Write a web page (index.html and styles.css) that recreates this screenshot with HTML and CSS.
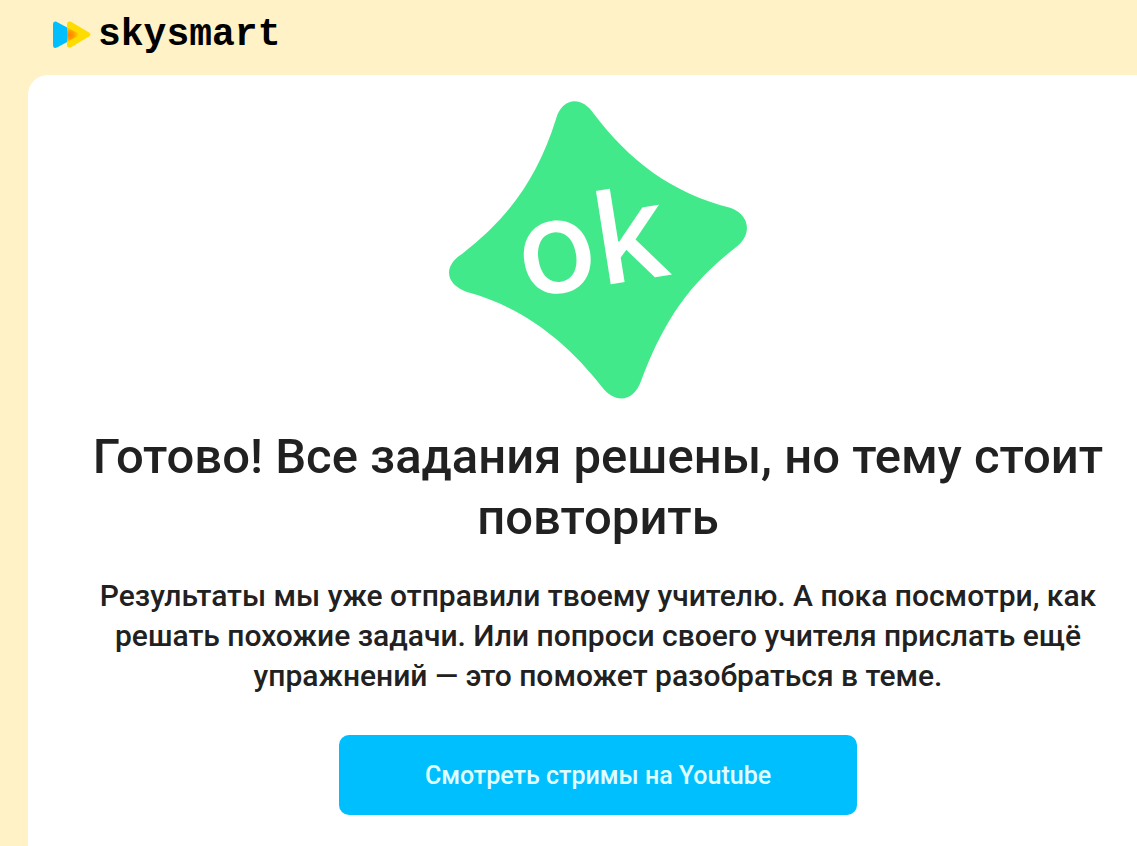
FILE: index.html
```html
<!DOCTYPE html>
<html lang="ru">
<head>
<meta charset="utf-8">
<meta name="viewport" content="width=device-width, initial-scale=1">
<title>Skysmart</title>
<link rel="stylesheet" href="styles.css">
</head>
<body class="page">
<header class="header">
  <a class="logo" href="#">
    <svg class="logo-mark" viewBox="0 0 38 28" aria-hidden="true">
      <defs>
        <radialGradient id="glow" gradientUnits="userSpaceOnUse" cx="17" cy="14" r="9">
          <stop offset="0" stop-color="#ff8200"/>
          <stop offset="0.4" stop-color="#ff9a00"/>
          <stop offset="1" stop-color="#ffdc00"/>
        </radialGradient>
      </defs>
      <path fill="#00bfff" d="M0 3Q0 0 3 0.500L16 7.500V20L4 26.500Q0 28 0 24Z"/>
      <path fill="#ffdc00" d="M14 3Q14-0.500 18 0.800L36 11.500Q38.500 13.500 36 15.500L18 26.200Q14 27.500 14 24Z"/>
      <path fill="url(#glow)" d="M14 6.500L25 12Q27 13.500 25 15L14 21Z"/>
    </svg>
    <span class="logo-text">skysmart</span>
  </a>
</header>
<main class="card">
  <svg class="badge" viewBox="0 0 300 300" role="img" aria-label="ok">
    <path fill="#42e98a" d="M108 19C114-2 133-5 146 14C181 60 223 93 283 108C303 116 304 136 287 148C237 187 214 226 193 281C186 302 167 304 154 287C119 242 75 207 19 192C-3 184-5 166 14 154C63 116 90 76 108 19Z"/>
    <text class="badge-text" transform="translate(76 198) rotate(-9)">ok</text>
  </svg>
  <h1 class="title">Готово! Все задания решены, но тему стоит повторить</h1>
  <p class="description">Результаты мы уже отправили твоему учителю. А пока посмотри, как решать похожие задачи. Или попроси своего учителя прислать ещё упражнений — это поможет разобраться в теме.</p>
  <button class="action" type="button">Смотреть стримы на Youtube</button>
</main>
</body>
</html>
```
FILE: styles.css
```css
* {
  box-sizing: border-box;
}

.page {
  display: flex;
  flex-direction: column;
  min-height: 100vh;
  margin: 0;
  background: #fef2c6;
  color: #212121;
  font-family: Roboto, "Noto Sans", sans-serif;
}

.header {
  display: flex;
  height: 75px;
  padding: 12px 53px;
}

.logo {
  display: flex;
  align-items: center;
  gap: 7px;
  height: 46px;
  color: #000;
  text-decoration: none;
}

.logo-mark {
  width: 38px;
  height: 28px;
}

.logo-text {
  font: bold 38px/40px "Liberation Mono", monospace;
}

.card {
  display: flex;
  flex: 1;
  flex-direction: column;
  align-items: center;
  margin-left: 28px;
  padding: 25px 24px 31px 55px;
  border-top-left-radius: 20px;
  background: #fff;
}

.badge {
  width: 300px;
  height: 300px;
}

.badge-text {
  fill: #fff;
  font: 500 130px Inter, sans-serif;
}

.title {
  margin: 26px 0 28px;
  font-size: 49px;
  font-weight: 500;
  line-height: 61px;
  text-align: center;
}

.description {
  max-width: 1010px;
  margin: 0 0 39px;
  font-size: 30px;
  font-weight: 500;
  line-height: 40px;
  text-align: center;
}

.action {
  width: 518px;
  max-width: 100%;
  height: 80px;
  border: 0;
  border-radius: 10px;
  background: #00bfff;
  color: #e0ffff;
  font-family: inherit;
  font-size: 25px;
  font-weight: 500;
}
```
